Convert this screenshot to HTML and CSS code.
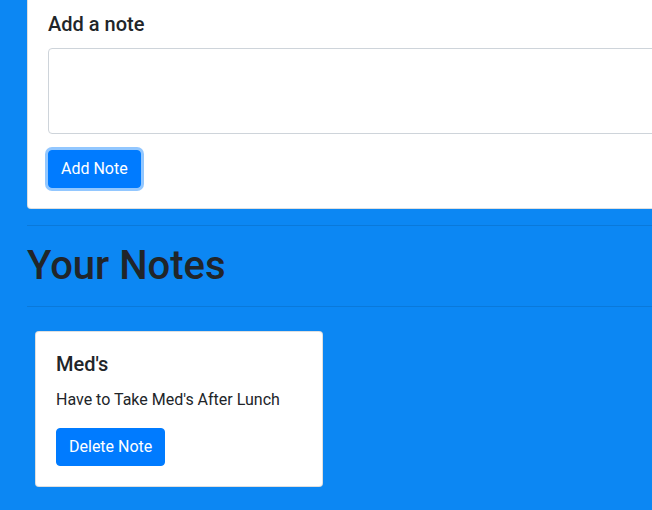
FILE: index.html
```html
<!DOCTYPE html>
<html lang="en">
<head>
<meta charset="utf-8">
<title>Notes</title>
<link rel="stylesheet" href="styles.css">
</head>
<body>
<div class="container">
  <div class="card add-card">
    <h5 class="card-title">Add a note</h5>
    <textarea class="form-control" rows="3"></textarea>
    <button class="btn btn-primary btn-focus">Add Note</button>
  </div>
  <hr>
  <h1 class="page-title">Your Notes</h1>
  <hr>
  <div class="notes">
    <div class="card note-card">
      <h5 class="card-title">Med's</h5>
      <p class="note-text">Have to Take Med's After Lunch</p>
      <button class="btn btn-primary">Delete Note</button>
    </div>
  </div>
</div>
</body>
</html>
```
FILE: styles.css
```css
html, body {
  margin: 0;
  padding: 0;
}
body {
  background: #0c87f3;
  font-family: Roboto, "Liberation Sans", Arial, sans-serif;
  color: #212529;
  font-size: 16px;
  line-height: 1.5;
  overflow: hidden;
  width: 652px;
  height: 510px;
}
.container {
  margin-left: 27px;
  width: 760px;
}
.card {
  background: #fff;
  border: 1px solid rgba(0,0,0,.125);
  border-radius: 4px;
  box-sizing: border-box;
}
.add-card {
  border-top: none;
  border-top-left-radius: 0;
  border-top-right-radius: 0;
  padding: 12px 20px 20px 20px;
  display: flex;
  flex-direction: column;
  align-items: flex-start;
}
.card-title {
  margin: 0 0 12px 0;
  font-size: 20px;
  font-weight: 500;
  line-height: 24px;
}
.form-control {
  display: block;
  box-sizing: border-box;
  width: 100%;
  height: 86px;
  padding: 6px 12px;
  border: 1px solid #ced4da;
  border-radius: 4px;
  font: inherit;
  resize: none;
  margin: 0 0 16px 0;
}
.btn {
  font-family: inherit;
  font-size: 16px;
  line-height: 24px;
  padding: 6px 12px;
  border: 1px solid #007bff;
  border-radius: 4px;
  background: #007bff;
  color: #fff;
  cursor: pointer;
}
.btn-focus {
  box-shadow: 0 0 0 3px rgba(38,143,255,.5);
}
hr {
  margin: 16px 0;
  border: 0;
  border-top: 1px solid rgba(0,0,0,.1);
}
.page-title {
  margin: 0;
  font-size: 40px;
  font-weight: 500;
  line-height: 48px;
}
.notes {
  display: flex;
  padding-top: 8px;
}
.note-card {
  margin-left: 8px;
  width: 288px;
  padding: 20px;
}
.note-card .card-title {
  margin-bottom: 12px;
}
.note-text {
  margin: 0 0 16px 0;
}
```
